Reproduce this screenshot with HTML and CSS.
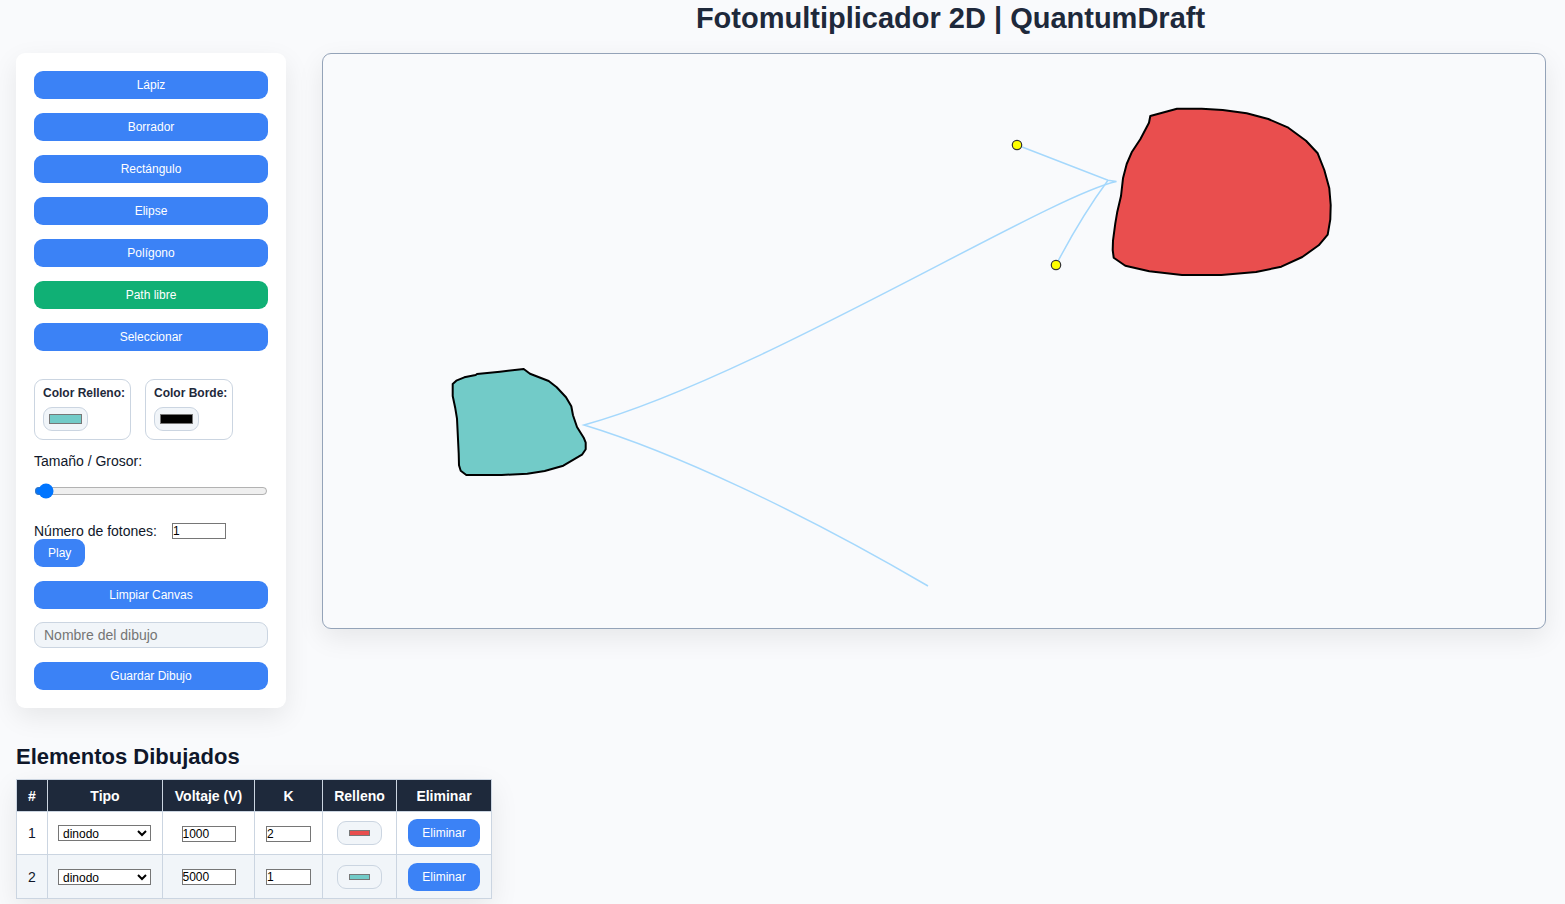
FILE: index.html
```html
<!DOCTYPE html>
<html lang="es">
<head>
<meta charset="utf-8">
<title>Fotomultiplicador 2D | QuantumDraft</title>
<link rel="stylesheet" href="styles.css">
</head>
<body>
<header class="page-header"><h1>Fotomultiplicador 2D | QuantumDraft</h1></header>
<main class="workspace">
  <aside class="panel">
    <div class="tools">
      <button type="button" class="btn">Lápiz</button>
      <button type="button" class="btn">Borrador</button>
      <button type="button" class="btn">Rectángulo</button>
      <button type="button" class="btn">Elipse</button>
      <button type="button" class="btn">Polígono</button>
      <button type="button" class="btn btn-active">Path libre</button>
      <button type="button" class="btn">Seleccionar</button>
    </div>
    <div class="colors">
      <div class="color-card card-fill"><label for="fill">Color Relleno:</label><input type="color" id="fill" class="swatch" value="#72cbc8"></div>
      <div class="color-card card-stroke"><label for="stroke">Color Borde:</label><input type="color" id="stroke" class="swatch" value="#000000"></div>
    </div>
    <div class="size-field">
      <label for="size">Tamaño / Grosor:</label>
      <input type="range" id="size" class="slider" min="1" max="50" value="2">
    </div>
    <div class="photons">
      <div class="photon-row"><label for="photons">Número de fotones:</label><input type="number" id="photons" class="number" value="1"></div>
      <button type="button" class="btn">Play</button>
    </div>
    <div class="saving">
      <button type="button" class="btn">Limpiar Canvas</button>
      <input type="text" class="name" aria-label="Nombre del dibujo" placeholder="Nombre del dibujo">
      <button type="button" class="btn">Guardar Dibujo</button>
    </div>
  </aside>
  <svg class="canvas" viewBox="0 0 1222 574" role="img" aria-label="Trayectorias entre dinodos">
    <polygon class="shape" fill="#e94e4e" points="827.3,62 854,54.7 878.7,54.7 899.7,56 923.7,59.3 945.3,65 965.3,73.7 983,86.7 994.7,99.3 1001.3,116 1006.3,134.3 1007.7,151 1007.3,165.3 1004.7,180.7 995.7,191.3 979.3,203 958.3,212.7 933,218 898.3,221 859,221 826.3,217.3 802.3,211.7 790.7,203.7 789.7,196 790,186.7 792.3,169.3 794.3,157.7 798,142 800,124.3 803.7,110 808.7,98.3 817.3,85.3 826,68.7"/>
    <polygon class="shape" fill="#72cbc8" points="129.7,330 133.3,326.7 141.3,323.3 152.7,321 154,320 177,317.7 200.7,315 207,319.7 225.7,327 233.7,333.3 243,343.3 248.3,352.3 250,361.3 254,373 260.7,383.7 262.7,388.7 262.7,395.3 259,400.7 240.3,411.7 221.7,417 204.3,419.7 178.7,421 143.3,421 137.7,416.7 136,411.3 135.7,399.3 134,364.7 132.3,354.3 129.7,342"/>
    <path class="track" d="M605 532C475 456 350 398 261 371C430 325 725 142 793.5 127.5L785 126.3L694 91"/>
    <path class="track" d="M785 126.3Q758 163 733 211"/>
    <circle class="electron" cx="694" cy="91" r="4.7"/>
    <circle class="electron" cx="733" cy="211" r="4.7"/>
  </svg>
</main>
<section class="elements">
  <h2>Elementos Dibujados</h2>
  <table>
    <colgroup><col class="c-id"><col class="c-type"><col class="c-volt"><col class="c-k"><col class="c-fill"><col class="c-del"></colgroup>
    <thead><tr><th>#</th><th>Tipo</th><th>Voltaje (V)</th><th>K</th><th>Relleno</th><th>Eliminar</th></tr></thead>
    <tbody>
      <tr><td>1</td><td><select aria-label="Tipo 1"><option>dinodo</option></select></td><td><input type="number" class="number" aria-label="Voltaje 1" value="1000"></td><td><input type="number" class="number number-k" aria-label="K 1" value="2"></td><td><input type="color" class="swatch swatch-cell" aria-label="Relleno 1" value="#e94e4e"></td><td><button type="button" class="btn">Eliminar</button></td></tr>
      <tr><td>2</td><td><select aria-label="Tipo 2"><option>dinodo</option></select></td><td><input type="number" class="number" aria-label="Voltaje 2" value="5000"></td><td><input type="number" class="number number-k" aria-label="K 2" value="1"></td><td><input type="color" class="swatch swatch-cell" aria-label="Relleno 2" value="#72cbc8"></td><td><button type="button" class="btn">Eliminar</button></td></tr>
    </tbody>
  </table>
</section>
</body>
</html>
```
FILE: styles.css
```css
* { box-sizing: border-box; }
body { margin: 0; background: #f9fafc; color: #0f172a; font: 14px/16px "Liberation Sans", Arial, sans-serif; }
h1, h2 { margin: 0; }
.page-header { padding: 1px 0 18px 336px; text-align: center; }
h1 { color: #1e293b; font-size: 29px; line-height: 34px; }
.workspace { display: flex; align-items: flex-start; gap: 36px; padding: 0 19px 0 16px; }
.panel { flex: 0 0 270px; padding: 18px; border-radius: 9px; background: #fff; box-shadow: 0 9px 27px rgba(0, 0, 0, .08); }
.tools, .saving { display: flex; flex-direction: column; gap: 14px; }
.btn { height: 28px; padding: 0 14px; border: 0; border-radius: 9px; background: #3b82f6; color: #fff; font: 12px "Liberation Sans", Arial, sans-serif; }
.btn-active { background: #10b075; }
.colors { display: flex; gap: 14px; margin-top: 28px; }
.color-card { display: flex; flex-direction: column; align-items: flex-start; gap: 7px; padding: 6px 4px 8px 8px; border: 1px solid #cbd5e1; border-radius: 9px; color: #1e293b; font-size: 12px; font-weight: 600; line-height: 14px; white-space: nowrap; }
.card-fill { width: 97px; }
.card-stroke { width: 88px; }
.swatch { display: block; width: 45px; height: 24px; padding: 2px 3px; border: 1px solid #cbd5e1; border-radius: 9px; background: #f1f5f9; }
.swatch-cell { margin: 0 auto; padding: 4px 9px; }
.size-field { margin-top: 13px; }
.slider { display: block; width: 100%; height: 16px; margin: 14px 0 24px; }
.photon-row { display: flex; align-items: center; gap: 15px; }
.number, select { height: 16px; margin: 0; padding: 0; border: 1px solid #767676; border-radius: 0; background: #fff; color: #000; font: 12px "Liberation Sans", Arial, sans-serif; }
.number { width: 54px; }
.number-k { width: 45px; }
select { display: block; width: 93px; margin: 0 10px; }
.saving { margin-top: 14px; }
.name { width: 100%; height: 26px; padding: 0 9px; border: 1px solid #cbd5e1; border-radius: 9px; background: #f1f5f9; font: 14px "Liberation Sans", Arial, sans-serif; }
.saving .name { margin-top: -1px; }
.canvas { flex: 1; min-width: 0; border: 1px solid #94a3b8; border-radius: 9px; background: #f9fafc; box-shadow: 0 9px 27px rgba(0, 0, 0, .08); }
.shape { stroke: #000; stroke-width: 2; stroke-linejoin: round; }
.track { fill: none; stroke: #a5d8fc; stroke-width: 1.5; }
.electron { fill: #ff0; stroke: #333; stroke-width: 1.2; }
.elements { padding: 36px 16px 5px; }
h2 { margin-bottom: 10px; font-size: 22px; line-height: 25px; }
table { width: 476px; table-layout: fixed; border-collapse: collapse; background: #fff; text-align: center; box-shadow: 0 9px 27px rgba(0, 0, 0, .08); }
th, td { padding: 0; border: 1px solid #cbd5e1; }
th { height: 32px; background: #1e293b; color: #fff; }
td { height: 43px; }
tbody tr:nth-child(even) { background: #f1f5f9; }
tbody tr:nth-child(even) td { height: 44px; }
.c-id { width: 31px; }
.c-type { width: 115px; }
.c-volt { width: 92px; }
.c-k { width: 68px; }
.c-fill { width: 74px; }
.c-del { width: 95px; }
```
